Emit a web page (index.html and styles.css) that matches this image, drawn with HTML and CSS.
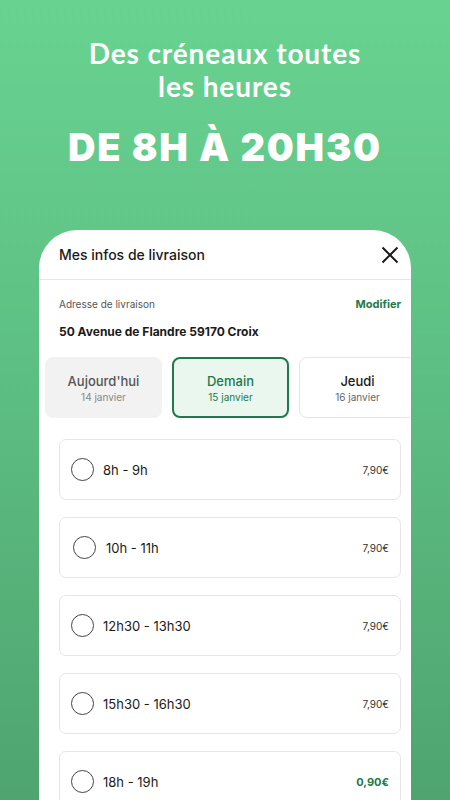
FILE: index.html
```html
<!DOCTYPE html>
<html lang="fr">
<head>
    <meta charset="UTF-8">
    <meta name="viewport" content="width=device-width, initial-scale=1.0">
    <title>Créneaux de livraison</title>
    <link rel="stylesheet" href="styles.css">
</head>
<body>
    <div class="screen">
        <header class="promo">
            <h1>Des créneaux toutes<br>les heures</h1>
            <p class="hours">DE 8H À 20H30</p>
        </header>

        <div class="phone">
            <div class="phone-head">
                <h2>Mes infos de livraison</h2>
                <svg class="close" width="18" height="18" viewBox="0 0 18 18">
                    <path d="M1.5 1.5 L16.5 16.5 M16.5 1.5 L1.5 16.5" stroke="#1a1a1a" stroke-width="2" fill="none"/>
                </svg>
            </div>

            <div class="address">
                <div class="address-top">
                    <span class="address-label">Adresse de livraison</span>
                    <a class="modify">Modifier</a>
                </div>
                <p class="address-value">50 Avenue de Flandre 59170 Croix</p>
            </div>

            <div class="days">
                <div class="day day-past">
                    <strong>Aujourd'hui</strong>
                    <span>14 janvier</span>
                </div>
                <div class="day day-active">
                    <strong>Demain</strong>
                    <span>15 janvier</span>
                </div>
                <div class="day">
                    <strong>Jeudi</strong>
                    <span>16 janvier</span>
                </div>
            </div>

            <div class="slots">
                <div class="slot">
                    <span class="radio"></span>
                    <span class="slot-time">8h - 9h</span>
                    <span class="price">7,90€</span>
                </div>
                <div class="slot slot-shift">
                    <span class="radio"></span>
                    <span class="slot-time">10h - 11h</span>
                    <span class="price">7,90€</span>
                </div>
                <div class="slot">
                    <span class="radio"></span>
                    <span class="slot-time">12h30 - 13h30</span>
                    <span class="price">7,90€</span>
                </div>
                <div class="slot">
                    <span class="radio"></span>
                    <span class="slot-time">15h30 - 16h30</span>
                    <span class="price">7,90€</span>
                </div>
                <div class="slot">
                    <span class="radio"></span>
                    <span class="slot-time">18h - 19h</span>
                    <span class="price price-deal">0,90€</span>
                </div>
            </div>
        </div>
    </div>
</body>
</html>
```

FILE: styles.css
```css
body {
    margin: 0;
    font-family: "Inter", "Noto Sans", sans-serif;
    color: #1a1a1a;
}
.screen {
    width: 450px;
    height: 800px;
    overflow: hidden;
    background: linear-gradient(180deg, #68d391 0%, #5cbd82 50%, #4fa46f 100%);
    display: flex;
    flex-direction: column;
    align-items: center;
}
.promo {
    text-align: center;
    color: #fff;
    padding-top: 37px;
}
.promo h1 {
    margin: 0;
    font-family: "Lato", sans-serif;
    font-weight: 700;
    font-size: 28px;
    line-height: 33px;
    letter-spacing: 0.9px;
}
.hours {
    margin: 21px 0 0;
    font-family: "Inter", sans-serif;
    font-weight: 900;
    font-size: 38px;
    line-height: 46px;
    letter-spacing: 1.8px;
}
.phone {
    margin-top: 60px;
    width: 372px;
    flex: 1;
    background: #fff;
    border-radius: 38px 38px 0 0;
    overflow: hidden;
}
.phone-head {
    display: flex;
    justify-content: space-between;
    align-items: center;
    padding: 0 12px 0 20px;
    height: 49px;
    border-bottom: 1px solid #e6e6e6;
}
.phone-head h2 {
    margin: 0;
    font-size: 14px;
    font-weight: 500;
}
.address {
    padding: 17px 10px 0 20px;
}
.address-top {
    display: flex;
    justify-content: space-between;
    align-items: center;
}
.address-label {
    font-size: 10px;
    color: #555;
}
.modify {
    font-size: 11px;
    font-weight: 700;
    color: #1e7a4c;
}
.address-value {
    margin: 13px 0 0;
    font-size: 12px;
    font-weight: 700;
}
.days {
    display: flex;
    gap: 10px;
    padding: 18px 0 0 6px;
}
.day {
    flex: 0 0 117px;
    height: 61px;
    box-sizing: border-box;
    border: 1px solid #e4e4e4;
    border-radius: 8px;
    display: flex;
    flex-direction: column;
    justify-content: center;
    align-items: center;
    gap: 2px;
}
.day strong {
    font-size: 13px;
    font-weight: 500;
}
.day span {
    font-size: 10px;
    color: #666;
}
.day-past {
    background: #f2f2f2;
    border-color: #f2f2f2;
}
.day-past strong {
    color: #555;
}
.day-past span {
    color: #888;
}
.day-active {
    background: #e9f7ef;
    border: 2px solid #1e7a4c;
}
.day-active strong,
.day-active span {
    color: #1e7a4c;
}
.slots {
    display: flex;
    flex-direction: column;
    gap: 17px;
    padding: 21px 10px 0 20px;
}
.slot {
    height: 61px;
    box-sizing: border-box;
    border: 1px solid #e6e6e6;
    border-radius: 7px;
    display: flex;
    align-items: center;
    padding: 0 11px 0 11px;
}
.radio {
    width: 21px;
    height: 21px;
    border: 1px solid #444;
    border-radius: 50%;
    flex: none;
}
.slot-time {
    margin-left: 9px;
    font-size: 13px;
    flex: 1;
}
.slot-shift .radio {
    margin-left: 2px;
}
.slot-shift .slot-time {
    margin-left: 10px;
}
.price {
    font-size: 10px;
    color: #333;
}
.price-deal {
    font-size: 11px;
    font-weight: 700;
    color: #1e7a4c;
}
```
